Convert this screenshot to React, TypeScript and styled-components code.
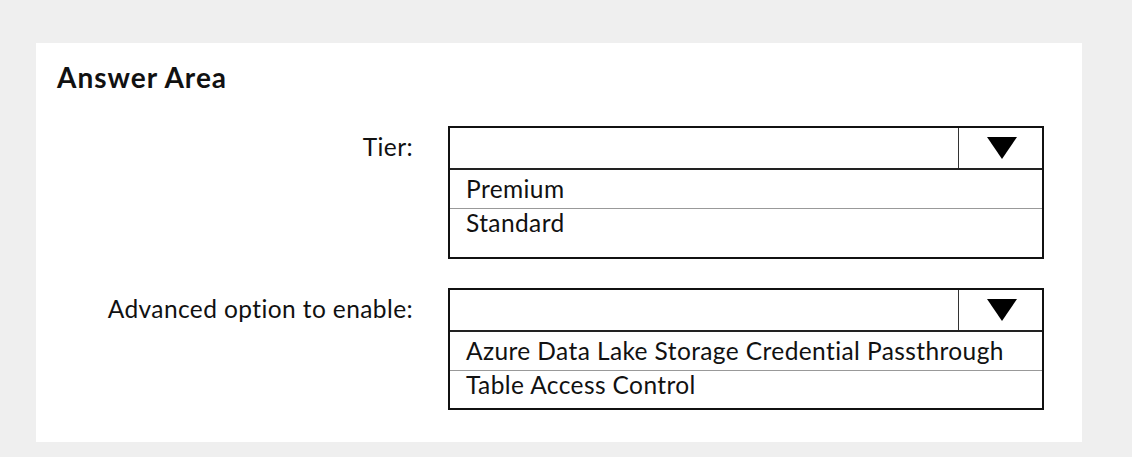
import React, { FC } from "react";
import styled, { createGlobalStyle } from "styled-components";

const GlobalStyle = createGlobalStyle`
  html, body {
    margin: 0;
    padding: 0;
    background: #efefef;
  }
  body {
    font-family: Lato, "Open Sans", "Liberation Sans", sans-serif;
    color: #111;
  }
`

interface DropdownProps {
  options: string[]
  height: number
}

const Dropdown: FC<DropdownProps> = (props) => {
  return (
    <Box $height={props.height}>
      <Header>
        <Selected />
        <ArrowCell>
          <svg width="32" height="24" viewBox="0 0 32 24">
            <polygon points="1,1 31,1 16,23" fill="#000" />
          </svg>
        </ArrowCell>
      </Header>
      {props.options.map((o) => (
        <Option key={o}>{o}</Option>
      ))}
    </Box>
  )
}

const questions = [
  { label: "Tier:", options: ["Premium", "Standard"], height: 133 },
  {
    label: "Advanced option to enable:",
    options: ["Azure Data Lake Storage Credential Passthrough", "Table Access Control"],
    height: 122,
  },
]

export default function App() {
  return (
    <Page>
      <GlobalStyle />
      <Panel>
        <Title>Answer Area</Title>
        <Questions>
          {questions.map((q) => (
            <Row key={q.label}>
              <Label>{q.label}</Label>
              <Dropdown options={q.options} height={q.height} />
            </Row>
          ))}
        </Questions>
      </Panel>
    </Page>
  )
}

const Page = styled.div`
  width: 1132px;
  height: 457px;
  padding: 43px 0 0 36px;
  box-sizing: border-box;
`

const Panel = styled.div`
  width: 1046px;
  height: 399px;
  background: #fff;
  box-sizing: border-box;
  padding: 17px 0 0 21px;
`

const Title = styled.h2`
  margin: 0;
  font-size: 28px;
  font-weight: 700;
  letter-spacing: 1px;
  line-height: 34px;
  color: #111;
`

const Questions = styled.div`
  display: flex;
  flex-direction: column;
  gap: 29px;
  margin-top: 32px;
`

const Row = styled.div`
  display: grid;
  grid-template-columns: 356px 596px;
  column-gap: 35px;
  align-items: start;
`

const Label = styled.div`
  text-align: right;
  font-size: 24.5px;
  letter-spacing: 0.4px;
  line-height: 28px;
  padding-top: 7px;
`

const Box = styled.div<{ $height: number }>`
  height: ${(p) => p.$height}px;
  border: 2px solid #111;
  box-sizing: border-box;
  display: flex;
  flex-direction: column;
`

const Header = styled.div`
  display: flex;
  height: 40px;
  flex-shrink: 0;
  border-bottom: 2px solid #222;
`

const Selected = styled.div`
  flex: 1;
`

const ArrowCell = styled.div`
  width: 84px;
  box-sizing: border-box;
  border-left: 1px solid #333;
  display: flex;
  align-items: center;
  justify-content: center;
  padding-left: 2px;
`

const Option = styled.div`
  font-size: 24.5px;
  letter-spacing: 0.4px;
  line-height: 28px;
  padding: 5px 0 5px 16px;
  white-space: nowrap;

  & + & {
    border-top: 1px solid #999;
    padding-top: 0;
  }
`
